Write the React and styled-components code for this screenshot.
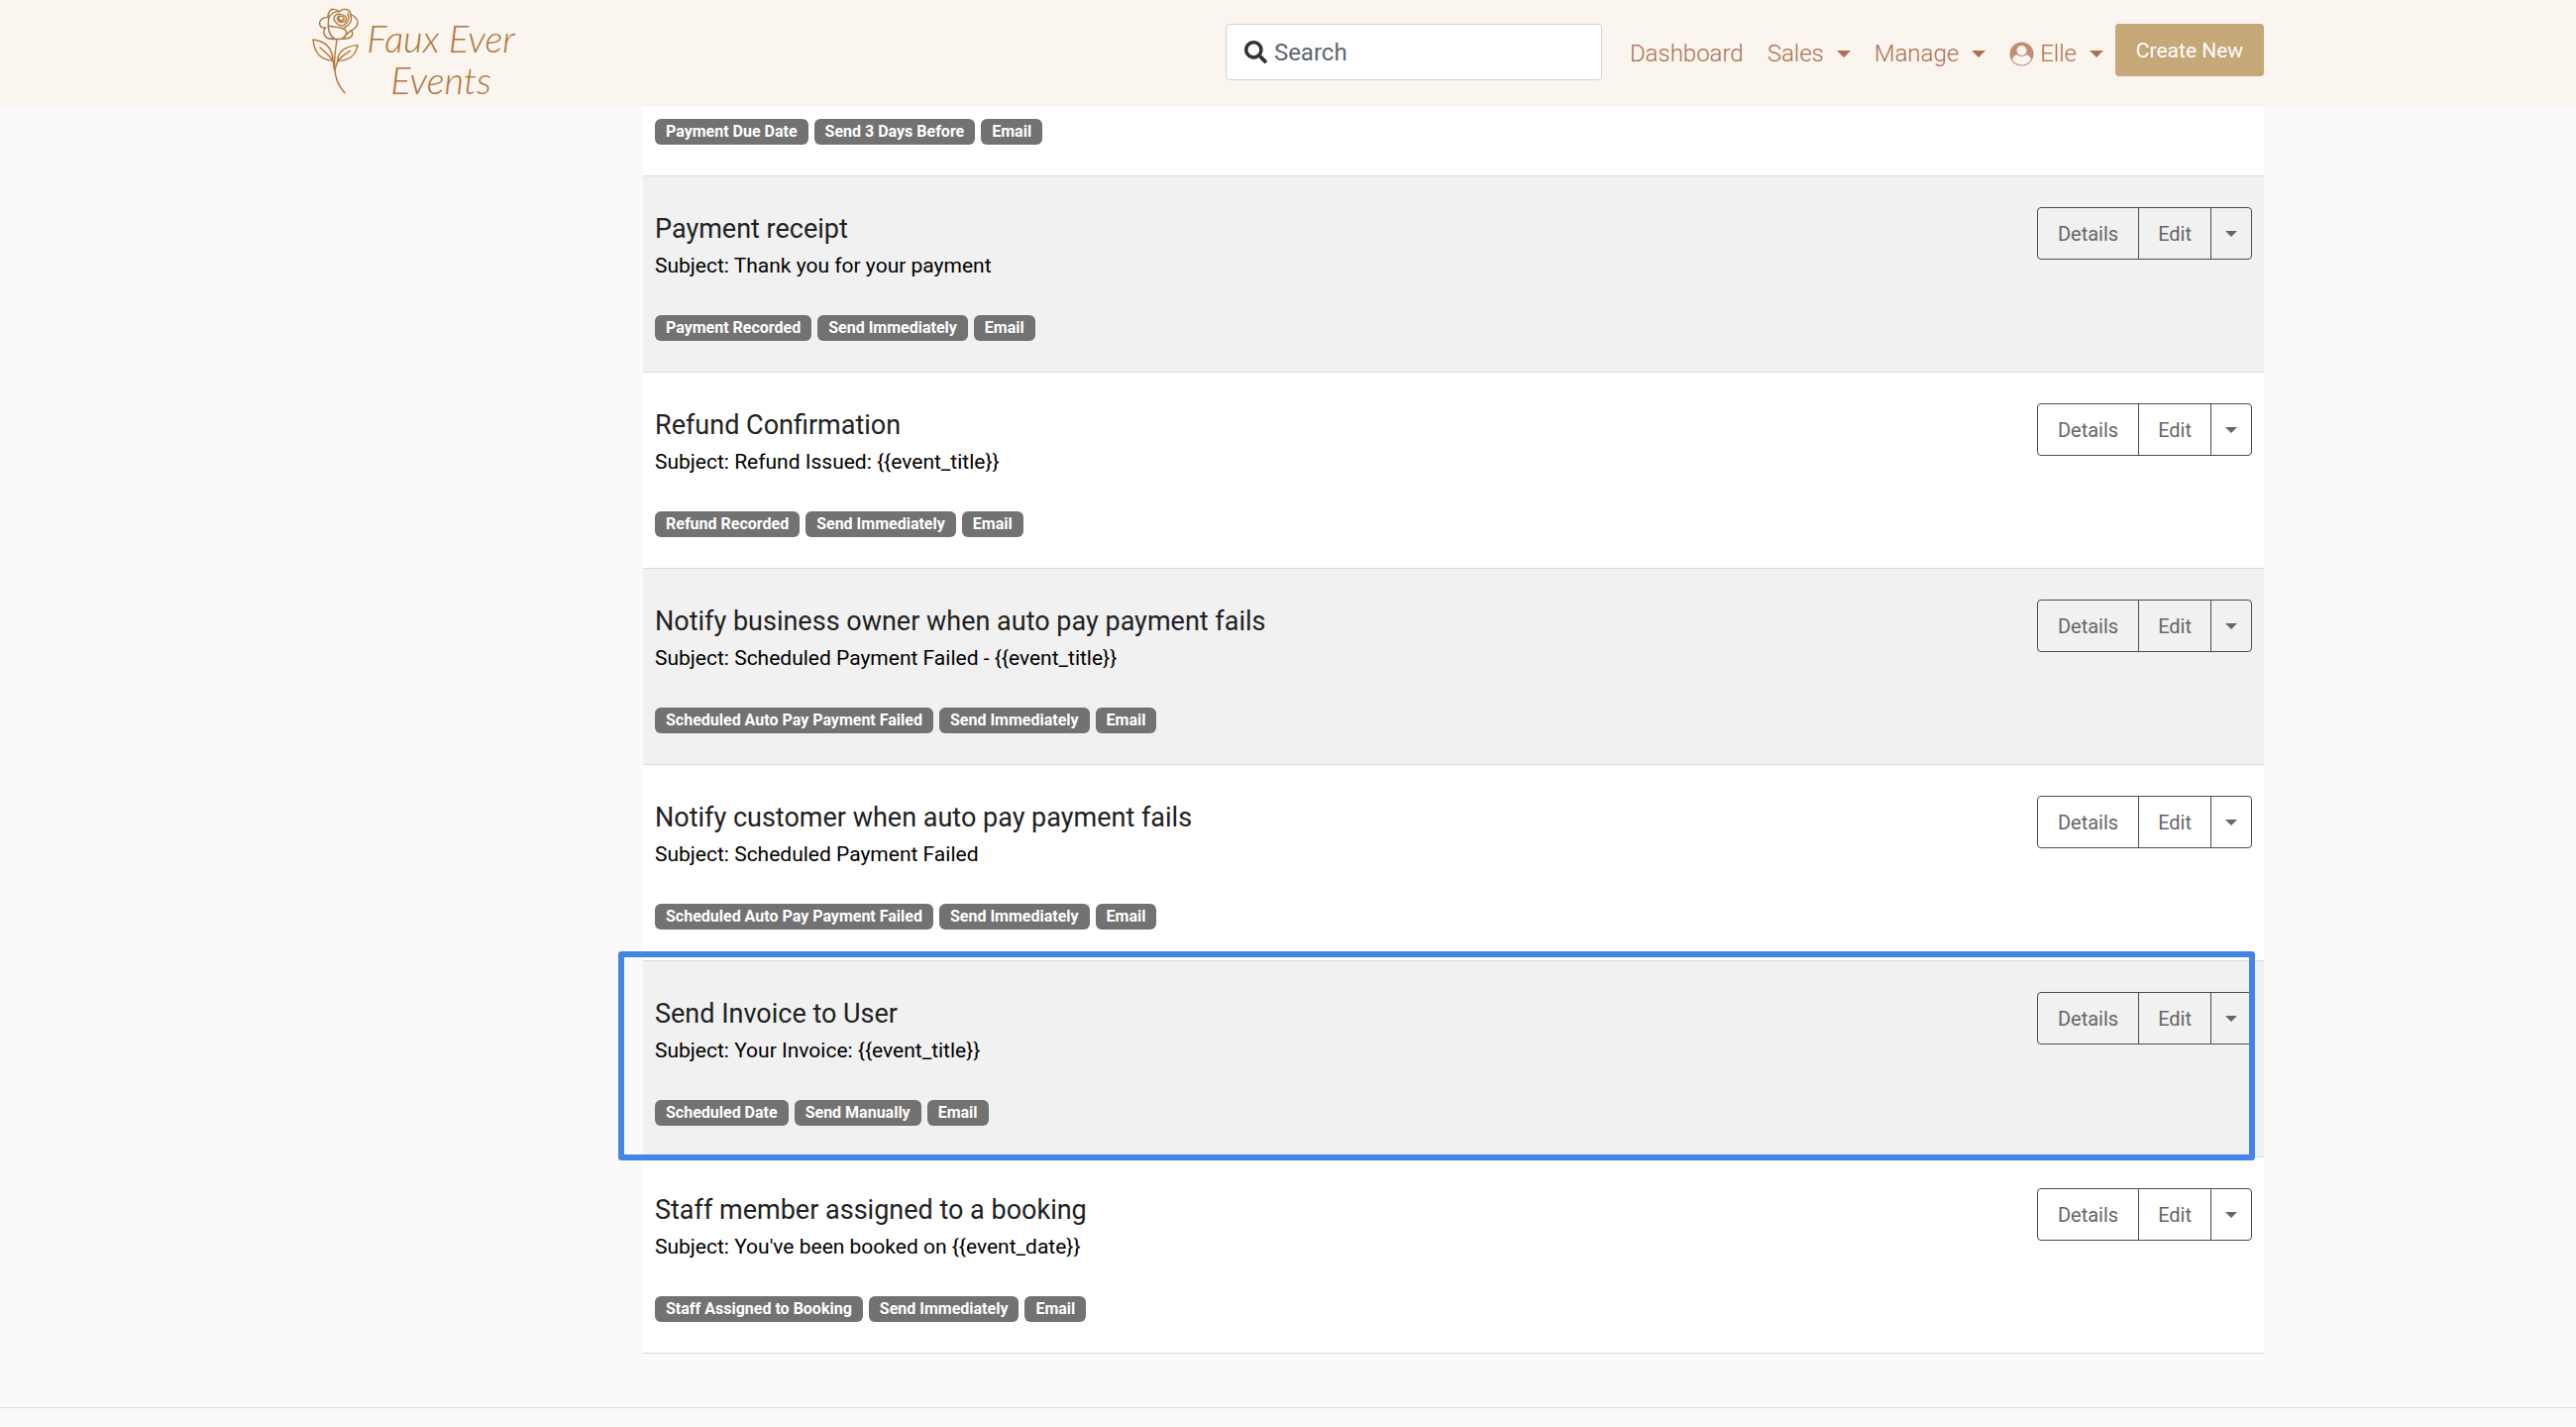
import React from "react";
import styled, { createGlobalStyle } from "styled-components";
import { FaSearch } from "react-icons/fa";

const GlobalStyle = createGlobalStyle`
  *, *::before, *::after { box-sizing: border-box; }
  body {
    margin: 0;
    background: #fafafa;
    color: #000;
    font-family: Roboto, "Liberation Sans", sans-serif;
    font-size: 21px;
  }
  button, input { font-family: inherit; }
  button { cursor: pointer; }
`;

const Container = styled.div`
  max-width: 1970px;
  margin: 0 auto;
`;

const Header = styled.header`
  background: #faf5ee;
`;

const HeaderBar = styled(Container)`
  display: flex;
  justify-content: space-between;
  height: 108px;
`;

const Brand = styled.a`
  display: flex;
  gap: 3px;
  padding-top: 5px;
  color: #b0763c;
  text-decoration: none;
`;

const BrandName = styled.span`
  display: block;
  width: 160px;
  padding-top: 12px;
  font-family: Lato, "Liberation Sans", sans-serif;
  font-size: 38px;
  font-style: italic;
  font-weight: 300;
  line-height: 42px;
  text-align: center;
`;

const Actions = styled.div`
  display: flex;
  align-items: flex-start;
  padding-top: 24px;
`;

const SearchField = styled.label`
  display: flex;
  align-items: center;
  gap: 7px;
  width: 380px;
  height: 57px;
  margin-right: 16px;
  padding: 0 18px;
  background: #fff;
  border: 1px solid #ced4da;
  border-radius: 4px;
  color: #333;
`;

const SearchInput = styled.input`
  flex: 1;
  min-width: 0;
  padding: 0;
  border: 0;
  outline: 0;
  background: transparent;
  color: #333;
  font-size: 24px;
  &::placeholder { color: #5f666d; opacity: 1; }
`;

const Nav = styled.nav`
  display: flex;
`;

const NavLink = styled.a`
  display: flex;
  align-items: center;
  height: 60px;
  padding: 0 12px;
  border: 0;
  background: none;
  color: #ae704e;
  font-size: 24px;
  font-weight: 300;
  text-decoration: none;
`;

const Caret = styled.span`
  width: 0;
  height: 0;
  border: ${(p) => p.$size}px solid transparent;
  border-top-color: currentColor;
  border-bottom: 0;
  margin-left: ${(p) => p.$gap}px;
`;

const UserIcon = styled.svg`
  margin-right: 6px;
`;

const CreateButton = styled.button`
  width: 150px;
  height: 53px;
  border: 0;
  border-radius: 4px;
  background: #c5a778;
  color: #fff;
  font-size: 21px;
`;

const Content = styled(Container)`
  display: grid;
  grid-template-columns: 334px minmax(0, 1fr);
`;

const TemplateList = styled.ul`
  grid-column: 2;
  margin: 0;
  padding: 0;
  list-style: none;
  border-bottom: 1px solid #d9dbdd;
`;

const Row = styled.li`
  position: relative;
  display: flex;
  justify-content: space-between;
  align-items: flex-start;
  padding: 31px 12px;
  background: #fff;
  &:nth-child(even) { background: #f1f1f1; }
  & + & { border-top: 1px solid #d9dbdd; }
`;

const ScrolledRow = styled(Row)`
  padding-top: 12px;
`;

const Title = styled.h2`
  margin: 6px 0 5px;
  color: #212121;
  font-size: 27px;
  font-weight: 400;
  line-height: 32px;
`;

const Subject = styled.p`
  margin: 0 0 34px;
  font-size: 21px;
  line-height: 32px;
`;

const Badges = styled.div`
  display: flex;
  gap: 6px;
`;

const Badge = styled.span`
  padding: 0 11px;
  border-radius: 6px;
  background: #727272;
  color: #fff;
  font-size: 16px;
  font-weight: 700;
  line-height: 26px;
`;

const ButtonGroup = styled.div`
  display: flex;
  height: 53px;
  border: 1px solid #4c4c4e;
  border-radius: 4px;
`;

const GroupButton = styled.button`
  display: flex;
  align-items: center;
  padding: 0 ${(p) => p.$pad}px;
  border: 0;
  background: none;
  color: #666;
  font-size: 20px;
  & + & { border-left: 1px solid #4c4c4e; }
`;

const Highlight = styled.div`
  position: absolute;
  z-index: 1;
  inset: -10px 9px -4px -25px;
  border: 6px solid #4285e6;
  border-radius: 3px;
  pointer-events: none;
`;

const Footer = styled.footer`
  height: 20px;
  margin-top: 54px;
  border-top: 1px solid #dcdedf;
`;

const templates = [
  { title: "Payment receipt", subject: "Thank you for your payment", tags: ["Payment Recorded", "Send Immediately", "Email"] },
  { title: "Refund Confirmation", subject: "Refund Issued: {{event_title}}", tags: ["Refund Recorded", "Send Immediately", "Email"] },
  { title: "Notify business owner when auto pay payment fails", subject: "Scheduled Payment Failed - {{event_title}}", tags: ["Scheduled Auto Pay Payment Failed", "Send Immediately", "Email"] },
  { title: "Notify customer when auto pay payment fails", subject: "Scheduled Payment Failed", tags: ["Scheduled Auto Pay Payment Failed", "Send Immediately", "Email"] },
  { title: "Send Invoice to User", subject: "Your Invoice: {{event_title}}", tags: ["Scheduled Date", "Send Manually", "Email"], highlighted: true },
  { title: "Staff member assigned to a booking", subject: "You've been booked on {{event_date}}", tags: ["Staff Assigned to Booking", "Send Immediately", "Email"] },
];

function Rose() {
  return (
    <svg width="47" height="92" viewBox="14 0 141 276" fill="none" stroke="currentColor" strokeWidth="4.2" strokeLinecap="round" strokeLinejoin="round" aria-hidden="true">
      <path d="M62 37C61 22 70 12 80 13C87 13 92 16 96 20C104 12 118 11 125 17C130 21 131 25 131 29" />
      <path d="M62 37C46 37 35 48 37 58C39 67 45 70 54 69" />
      <path d="M54 69C47 78 48 89 58 99C68 104 88 104 104 103C122 103 134 99 136 90C137 84 135 80 133 77" />
      <path d="M131 29C143 33 153 44 152 54C151 63 144 72 133 77C124 82 117 90 105 103" />
      <path d="M96 20C80 19 66 28 64 42C60 65 64 90 82 103" />
      <path d="M64 63C76 66 88 67 99 69C110 71 118 76 118 84C117 93 112 99 105 103" />
      <path d="M122 25C127 38 125 52 111 61C100 66 86 57 81 46C78 33 87 27 99 28C112 29 120 36 117 45C112 55 96 55 91 45C88 36 96 33 103 34C112 35 113 44 105 47C97 48 94 43 95 39" />
      <path d="M131 31C137 46 129 61 112 69" />
      <path d="M89 104C84 138 80 165 82 190C84 222 97 250 113 266" />
      <path d="M17 105C49 109 76 126 77 169C45 165 21 151 17 105Z" />
      <path d="M38 129C56 145 72 157 78 172L82 199" />
      <path d="M152 122C116 125 92 140 91 170C126 168 146 155 152 122Z" />
      <path d="M129 139C114 148 99 160 91 171L82 199" />
    </svg>
  );
}

function Avatar() {
  return (
    <UserIcon width="25" height="25" viewBox="0 0 25 25" aria-hidden="true">
      <circle cx="12.5" cy="12.5" r="12" fill="#c08d72" />
      <path d="M3 18C3.500 15.500 5.500 13.600 8 13.300C10.500 15.500 14.500 15.500 17 13.300C19.500 13.600 21.500 15.500 22 18C20 21.600 16.500 23.500 12.500 23.500C8.500 23.500 5 21.600 3 18Z" fill="#faf5ee" />
      <circle cx="12.5" cy="9" r="5" fill="#faf5ee" />
    </UserIcon>
  );
}

function Tags({ items }) {
  return <Badges>{items.map((t) => <Badge key={t}>{t}</Badge>)}</Badges>;
}

function TemplateRow({ title, subject, tags, highlighted }) {
  return (
    <Row>
      <div>
        <Title>{title}</Title>
        <Subject>Subject: {subject}</Subject>
        <Tags items={tags} />
      </div>
      <ButtonGroup>
        <GroupButton type="button" $pad={20}>Details</GroupButton>
        <GroupButton type="button" $pad={19}>Edit</GroupButton>
        <GroupButton type="button" $pad={14} aria-label="More actions">
          <Caret $size={6} $gap={0} />
        </GroupButton>
      </ButtonGroup>
      {highlighted && <Highlight />}
    </Row>
  );
}

export default function App() {
  return (
    <>
      <GlobalStyle />
      <Header>
        <HeaderBar>
          <Brand href="#">
            <Rose />
            <BrandName>Faux Ever Events</BrandName>
          </Brand>
          <Actions>
            <SearchField>
              <FaSearch size={23} aria-hidden="true" />
              <SearchInput type="search" placeholder="Search" aria-label="Search" />
            </SearchField>
            <Nav>
              <NavLink href="#">Dashboard</NavLink>
              <NavLink as="button" type="button">Sales<Caret $size={7} $gap={13} /></NavLink>
              <NavLink as="button" type="button">Manage<Caret $size={7} $gap={13} /></NavLink>
              <NavLink as="button" type="button"><Avatar />Elle<Caret $size={7} $gap={13} /></NavLink>
            </Nav>
            <CreateButton type="button">Create New</CreateButton>
          </Actions>
        </HeaderBar>
      </Header>
      <Content as="main">
        <TemplateList>
          <ScrolledRow>
            <Tags items={["Payment Due Date", "Send 3 Days Before", "Email"]} />
          </ScrolledRow>
          {templates.map((t) => <TemplateRow key={t.title} {...t} />)}
        </TemplateList>
      </Content>
      <Footer />
    </>
  );
}
